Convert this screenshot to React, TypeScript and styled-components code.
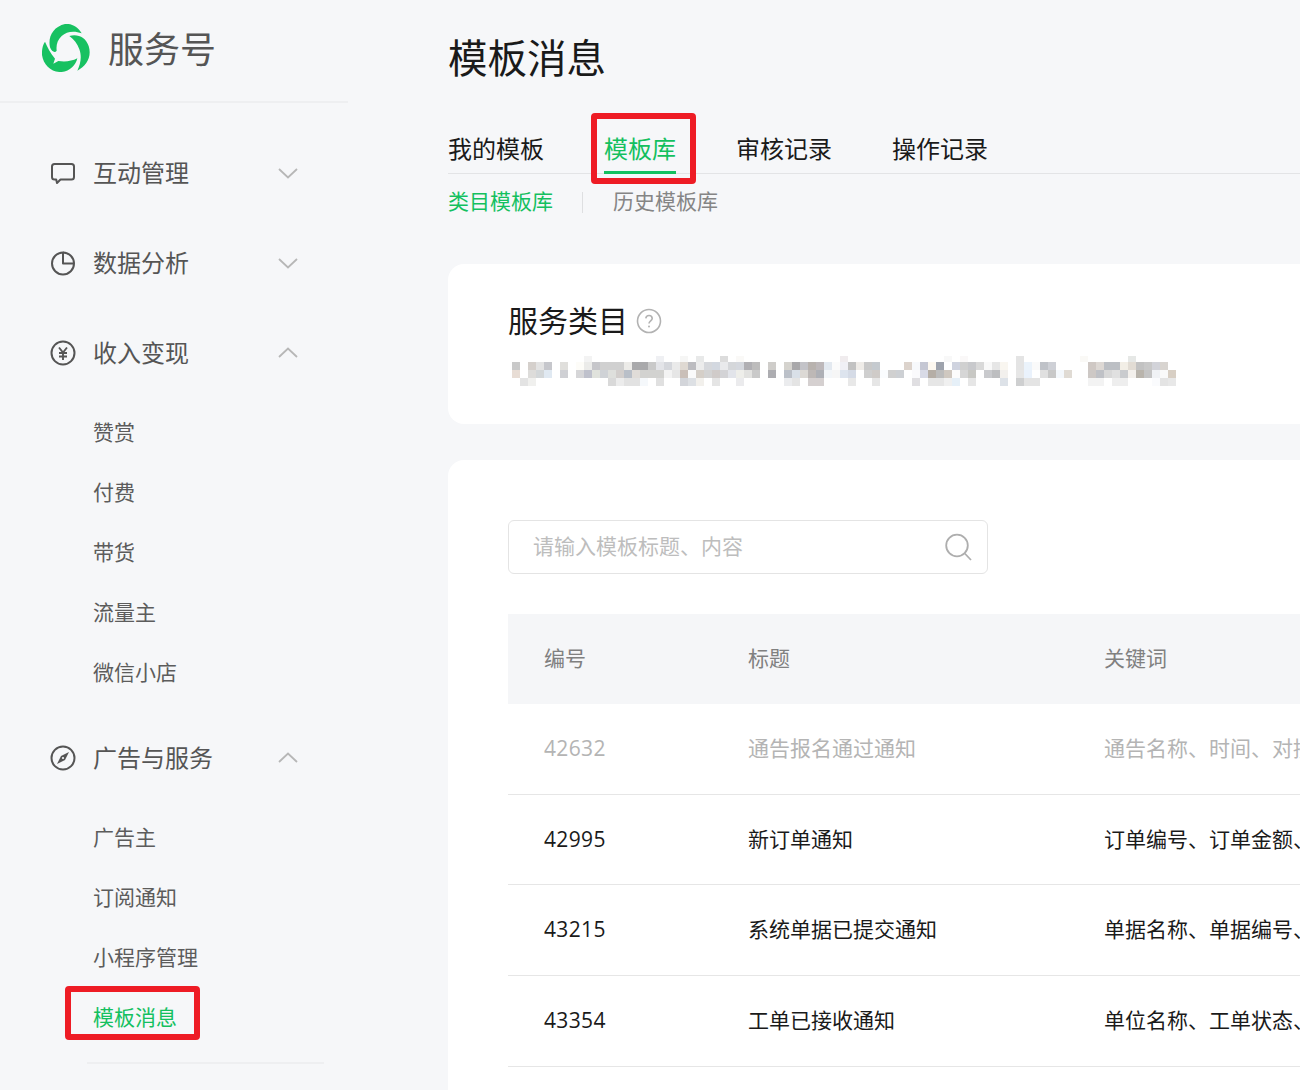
import React from 'react';
import styled, { createGlobalStyle } from 'styled-components';

const FONT = `"Noto Sans CJK SC", "Noto Sans", sans-serif`;
const GREEN = '#14c05f';

const Global = createGlobalStyle`
  html, body { margin: 0; padding: 0; background: #f6f7f9; }
  * { box-sizing: border-box; }
`;

const Page = styled.div`
  width: 1300px; height: 1090px; overflow: hidden; display: flex;
  background: #f6f7f9; font-family: ${FONT};
`;
const Sidebar = styled.aside`width: 348px; flex: none;`;
const Brand = styled.div`
  height: 103px; display: flex; align-items: center; padding: 0 0 8px 42px; gap: 18px;
  border-bottom: 2px solid #eeeff1;
`;
const BrandName = styled.span`font-size: 36px; line-height: 50px; color: #555;`;
const Nav = styled.nav`padding-top: 25px;`;
const Group = styled.div<{ $gap?: boolean }>`
  height: 90px; display: flex; align-items: center; padding-left: 50px;
  margin-top: ${p => (p.$gap ? 10 : 0)}px;
  color: #555; font-size: 24px;
`;
const GroupIcon = styled.span`width: 26px; height: 26px; margin-right: 17px; display: flex; flex: none;`;
const GroupLabel = styled.span`width: 185px; padding-bottom: 4px;`;
const SubList = styled.div`margin-top: 5px;`;
const SubItem = styled.div<{ $active?: boolean }>`
  position: relative; height: 60px; line-height: 56px; padding-left: 93px; font-size: 21px;
  color: ${p => (p.$active ? GREEN : '#5c5c5c')};
`;
const SideRule = styled.div`height: 2px; width: 237px; margin: 14px 0 0 87px; background: #eeeff1;`;

const Redbox = styled.span<{ $l: number; $t: number; $w: number; $h: number }>`
  position: absolute; left: ${p => p.$l}px; top: ${p => p.$t}px; width: ${p => p.$w}px; height: ${p => p.$h}px;
  border: 6px solid #ee1c25; border-radius: 4px; pointer-events: none;
`;

const Main = styled.main`width: 1000px; flex: none; margin-left: 100px; padding-top: 29px;`;
const Title = styled.h1`margin: 0; font-size: 39.5px; line-height: 54px; font-weight: 400; color: #1a1a1a;`;
const Tabs = styled.div`display: flex; gap: 60px; margin-top: 42px; height: 49px; border-bottom: 1px solid #e3e4e6;`;
const Tab = styled.div<{ $active?: boolean }>`
  position: relative; font-size: 24px; line-height: 45px; height: 49px; white-space: nowrap;
  color: ${p => (p.$active ? GREEN : '#1a1a1a')};
  border-bottom: 3px solid ${p => (p.$active ? GREEN : 'transparent')};
`;
const SubTabs = styled.div`display: flex; align-items: center; height: 56px;`;
const SubTab = styled.span<{ $active?: boolean }>`
  font-size: 21px; color: ${p => (p.$active ? GREEN : '#858585')}; line-height: 52px; padding-bottom: 4px;
`;
const SubSep = styled.span`width: 1px; height: 21px; background: #dedfe1; margin: 0 30px 0 29px;`;

const Card = styled.section`background: #fff; border-radius: 16px 0 0 16px;`;
const InfoCard = styled(Card)`height: 160px; margin-top: 34px; padding: 33px 60px 0;`;
const CardTitle = styled.div`display: flex; align-items: center; gap: 8px; height: 48px; font-size: 30px; color: #1a1a1a;`;
const CardTitleText = styled.span`padding-bottom: 5px;`;
const Mosaic = styled.svg`display: block; margin: 11px 0 0 4px;`;
const ListCard = styled(Card)`margin-top: 36px; padding: 60px 60px 0; height: 800px;`;
const Search = styled.div`
  width: 480px; height: 54px; border: 1px solid #e4e4e4; border-radius: 6px; display: flex; align-items: center;
  justify-content: space-between; padding: 0 15px 0 24px; font-size: 21px; color: #bdbdbd;
`;
const SearchText = styled.span`padding-bottom: 4px;`;
const RowsWrap = styled.div`width: 880px;`;
const Row = styled.div<{ $head?: boolean }>`
  display: grid; grid-template-columns: 204px 356px 1fr; height: ${p => (p.$head ? 90 : 91)}px; align-items: center;
  padding-left: 36px; white-space: nowrap; font-size: 21px;
  ${p => (p.$head ? 'background:#f5f6f8;margin-top:40px;color:#808080;' : 'border-bottom:1px solid #e6e6e6;')}
  &:nth-child(3) { height: 90px; }
`;
const CellNum = styled.span<{ $off?: boolean }>`
  font-family: "Open Sans", ${FONT}; font-size: 21px; letter-spacing: .35px; padding-bottom: 2px;
  color: ${p => (p.$off ? '#b4b4b4' : '#1a1a1a')};
`;
const Cell = styled.span<{ $off?: boolean; $head?: boolean }>`
  padding-bottom: 4px;
  color: ${p => (p.$head ? '#808080' : p.$off ? '#b4b4b4' : '#1a1a1a')};
`;

const Logo = () => (
  <svg width="48" height="48" viewBox="126 72 144 144" fill="#17c161" style={{ flex: 'none', marginTop: 3 }}>
    <path d="M150 142C143 110 160 80 195 72C215 70 233 80 245 100C225 92 200 93 185 108C172 120 168 135 170 152C165 160 155 155 150 142Z" />
    <path d="M208 108C232 100 258 112 266 138C276 170 260 198 232 212C242 190 246 170 238 148C232 130 222 118 208 108Z" />
    <path d="M135 125C142 140 150 158 165 176L160 191L175 183C195 186 215 184 232 175C228 195 210 214 185 216C155 218 130 195 126 165C125 150 128 135 135 125Z" />
  </svg>
);

const stroke = { fill: 'none', stroke: '#555', strokeWidth: 2 };

const IconChat = () => (
  <svg width="26" height="26" viewBox="0 0 26 26" {...stroke}>
    <path d="M4.5 4H21.5A2.5 2.5 0 0 1 24 6.5V17A2.5 2.5 0 0 1 21.5 19.5H10.5L7 23L6.2 19.5H4.5A2.5 2.5 0 0 1 2 17V6.5A2.5 2.5 0 0 1 4.5 4Z" strokeLinejoin="round" />
  </svg>
);
const IconPie = () => (
  <svg width="26" height="26" viewBox="0 0 26 26" {...stroke}>
    <path d="M13 2.5A11 11 0 1 0 24 13.5H13Z" strokeLinejoin="round" />
    <path d="M13 2.5A11 11 0 0 1 24 13.5" />
  </svg>
);
const IconYen = () => (
  <svg width="26" height="26" viewBox="0 0 26 26" {...stroke}>
    <circle cx="13" cy="13" r="11.5" />
    <path d="M9 7.5L13 12.5L17 7.5M9 13H17M9 16.5H17M13 12.5V20" strokeWidth="1.9" />
  </svg>
);
const IconCompass = () => (
  <svg width="26" height="26" viewBox="0 0 26 26" {...stroke}>
    <circle cx="13" cy="13" r="11.5" />
    <path d="M19 7L15 15L7 19L11 11Z" fill="#555" stroke="none" />
    <circle cx="13" cy="13" r="1.1" fill="#f6f7f9" stroke="none" />
  </svg>
);
const Chevron = ({ up }: { up?: boolean }) => (
  <svg width="20" height="11" viewBox="0 0 20 11" fill="none" stroke="#b7b7b7" strokeWidth="1.8" style={{ marginTop: up ? -2 : 0 }}>
    <path d={up ? 'M1 10L10 1.5L19 10' : 'M1 1L10 9.5L19 1'} />
  </svg>
);
const IconHelp = () => (
  <svg width="26" height="26" viewBox="0 0 26 26" fill="none" stroke="#b2b2b2" strokeWidth="1.6">
    <circle cx="13" cy="13" r="11.5" />
    <path d="M9.8 10.3A3.2 3.2 0 0 1 13 7.5A3.1 3.1 0 0 1 16.2 10.4C16.2 12.8 13 13 13 15.6" />
    <circle cx="13" cy="18.4" r="1" fill="#b2b2b2" stroke="none" />
  </svg>
);
const IconSearch = () => (
  <svg width="28" height="28" viewBox="0 0 28 28" fill="none" stroke="#aeaeae" strokeWidth="1.8">
    <circle cx="13" cy="12.5" r="10.8" />
    <path d="M20.8 20.5L27 27" />
  </svg>
);

// The reference shows a redacted line as an 8px mosaic; each row lists "column:colour".
const mosaicRows = [
  '9:f3f3f3 18:eff0f3 21:f6f6f5 23:e8e9e9 26:dcdcdc 28:faf9f7 41:f0ecee 54:f8f8f8 56:faf8f8 63:e4e4e4 71:faf9f6 77:e6e8e6',
  '0:c9c9c9 2:d5d0cc 3:e3e3e3 4:c6c7cc 6:e0dfdc 8:fdfcf8 9:ebebe9 10:c6c6ca 11:d0d0d0 12:d0d0d0 13:d0d0d0 14:ecebe8 15:a9a9ab 16:a9a9ab 17:c9c9c9 18:e3e4e8 19:d5d7dc 20:eaeaea 21:dfd9d2 22:bcbcc0 23:ececec 24:d6d8dc 25:d3d8e0 26:e9eaec 27:d5d7da 28:d5d8de 29:b0afb3 30:bdbcbc 32:cfcdca 34:d5d3ce 35:a9a8aa 36:c3c3c8 37:b8b2ae 38:bdb8ba 39:e3e9f0 40:fbfbfb 41:f0f0f5 42:c2c2c2 43:efece8 44:c9c9c9 45:c5cacf 49:dcd3cc 50:f7f9fc 51:c5c7d3 52:fdf8f0 53:9ea3ad 55:cfd3df 56:d0d0d0 57:c8c9cc 58:d9d9d9 59:f9f9f9 60:e6e6e6 61:f9f6f0 63:e4e4e4 64:ebf3fb 65:fafafa 66:bfc2c8 67:ced0d6 72:cfc8c4 73:ddd8d4 74:bcbfc4 75:bcbfc4 76:f2eee6 77:e2dcd4 78:c2c2c2 79:c8c8c8 80:d2d3d9 81:d8d4d0',
  '0:e8ddd5 2:dddcda 3:d3d7d9 4:e0e9f2 6:cfd0d4 8:d6d6d8 9:bfc1cc 10:e0e2dc 11:cfd2d6 12:dedfdc 13:d2cecc 14:b9bfc8 15:e0dcd8 16:d2d2d0 17:d2d2d0 18:d2d2d0 19:f3f3f3 20:e6e6e6 21:cabfb8 22:fafafa 23:d5cfc8 24:d3d3d3 25:d0cbc9 26:d3d3d6 27:e2e4ea 28:eeeeea 29:e2e2e0 30:c9c9c9 32:adadb1 34:bbc0c8 35:d9e0e8 36:dcd9d5 37:bdb8b6 38:aeb0b6 39:f3f6f9 40:f6f6f6 41:dde4ee 42:d5dbe6 44:cfcfcf 45:cfcbc8 46:fafcfe 47:d0d0d0 48:cdd0d4 50:fafafc 51:d8dae6 52:b5aea6 53:bcbcbc 54:cfc8c0 55:fcfcfc 56:d6d6d6 57:c8c8c4 59:c9cacd 60:bdbec0 61:f2f0ed 63:e6e6e6 64:eaf2fc 66:e0e0e0 67:c8c8c8 68:f4f8fc 69:e0dbd4 72:cdc8c5 73:bfc1c6 74:d8d8d8 75:e0e0e0 76:c9cbce 77:f3f0ec 78:b9b4ac 79:c4c4c4 80:f0f2f5 81:fafafa 82:d8cfc4',
  '1:e3e3e3 2:f0f0ee 12:d9d9d9 13:ececec 14:e2e2e2 15:e2e2e2 16:f5f8fb 18:e0e0e0 21:d3d5da 22:dde0e4 23:f2f0ec 25:e5e5e5 28:ebebed 34:ebecee 35:e4e4e4 37:d5d0d0 38:d5d0d0 42:e8e8e8 45:e6e6e6 50:e0dfe2 52:e6e6e6 53:e6e6e6 54:f0f0f0 55:e6f0f8 57:e6e6e6 61:dde2e8 63:cecfd0 64:e4e4e4 65:e4e4e4 72:f3f3f3 73:f3f3f3 75:eeeeee 76:eeeeee 80:fafbfd 81:e4e4e4 82:e8e8e8',
];

const MosaicText = () => (
  <Mosaic width="664" height="30" viewBox="0 0 664 30" shapeRendering="crispEdges">
    {mosaicRows.map((row, r) =>
      row.split(' ').map(entry => {
        const [col, colour] = entry.split(':');
        return (
          <rect
            key={`${r}-${col}`}
            x={Number(col) * 8}
            y={r === 0 ? 0 : 6 + (r - 1) * 8}
            width="8"
            height={r === 0 ? 6 : 8}
            fill={`#${colour}`}
          />
        );
      }),
    )}
  </Mosaic>
);

const rows = [
  { id: '42632', title: '通告报名通过通知', kw: '通告名称、时间、对接人、联系方式', off: true },
  { id: '42995', title: '新订单通知', kw: '订单编号、订单金额、下单时间' },
  { id: '43215', title: '系统单据已提交通知', kw: '单据名称、单据编号、提交时间' },
  { id: '43354', title: '工单已接收通知', kw: '单位名称、工单状态、接收时间' },
];

export default function App() {
  return (
    <Page>
      <Global />
      <Sidebar>
        <Brand>
          <Logo />
          <BrandName>服务号</BrandName>
        </Brand>
        <Nav>
          <Group>
            <GroupIcon><IconChat /></GroupIcon>
            <GroupLabel>互动管理</GroupLabel>
            <Chevron />
          </Group>
          <Group>
            <GroupIcon><IconPie /></GroupIcon>
            <GroupLabel>数据分析</GroupLabel>
            <Chevron />
          </Group>
          <Group>
            <GroupIcon><IconYen /></GroupIcon>
            <GroupLabel>收入变现</GroupLabel>
            <Chevron up />
          </Group>
          <SubList>
            <SubItem>赞赏</SubItem>
            <SubItem>付费</SubItem>
            <SubItem>带货</SubItem>
            <SubItem>流量主</SubItem>
            <SubItem>微信小店</SubItem>
          </SubList>
          <Group $gap>
            <GroupIcon><IconCompass /></GroupIcon>
            <GroupLabel>广告与服务</GroupLabel>
            <Chevron up />
          </Group>
          <SubList>
            <SubItem>广告主</SubItem>
            <SubItem>订阅通知</SubItem>
            <SubItem>小程序管理</SubItem>
            <SubItem $active>
              模板消息
              <Redbox $l={65} $t={-2} $w={135} $h={54} />
            </SubItem>
          </SubList>
          <SideRule />
        </Nav>
      </Sidebar>
      <Main>
        <Title>模板消息</Title>
        <Tabs>
          <Tab>我的模板</Tab>
          <Tab $active>
            模板库
            <Redbox $l={-13} $t={-12} $w={105} $h={71} />
          </Tab>
          <Tab>审核记录</Tab>
          <Tab>操作记录</Tab>
        </Tabs>
        <SubTabs>
          <SubTab $active>类目模板库</SubTab>
          <SubSep />
          <SubTab>历史模板库</SubTab>
        </SubTabs>
        <InfoCard>
          <CardTitle>
            <CardTitleText>服务类目</CardTitleText>
            <IconHelp />
          </CardTitle>
          <MosaicText />
        </InfoCard>
        <ListCard>
          <Search>
            <SearchText>请输入模板标题、内容</SearchText>
            <IconSearch />
          </Search>
          <RowsWrap>
            <Row $head>
              <Cell $head>编号</Cell>
              <Cell $head>标题</Cell>
              <Cell $head>关键词</Cell>
            </Row>
            {rows.map(r => (
              <Row key={r.id}>
                <CellNum $off={r.off}>{r.id}</CellNum>
                <Cell $off={r.off}>{r.title}</Cell>
                <Cell $off={r.off}>{r.kw}</Cell>
              </Row>
            ))}
          </RowsWrap>
        </ListCard>
      </Main>
    </Page>
  );
}
